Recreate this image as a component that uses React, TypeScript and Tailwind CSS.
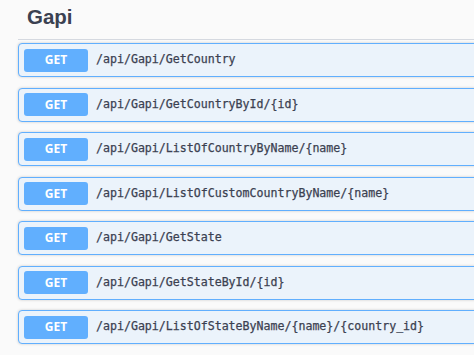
const ROUTES = [
  "/api/Gapi/GetCountry",
  "/api/Gapi/GetCountryById/{id}",
  "/api/Gapi/ListOfCountryByName/{name}",
  "/api/Gapi/ListOfCustomCountryByName/{name}",
  "/api/Gapi/GetState",
  "/api/Gapi/GetStateById/{id}",
  "/api/Gapi/ListOfStateByName/{name}/{country_id}",
]

function Operation({ path }: { path: string }) {
  return (
    <div className="flex h-[34px] items-center rounded-[4px] border border-[#61affe] bg-[#ebf3fb] pl-[5px] shadow-[0_0_3px_rgba(0,0,0,0.19)]">
      <span className="flex h-[23px] w-[64px] items-center justify-center rounded-[3px] bg-[#61affe] text-[12px] font-bold text-white [font-family:'Open_Sans',sans-serif]">
        GET
      </span>
      <span className="ml-[8px] text-[11.6px] text-[#3b4151] [font-family:'DejaVu_Sans_Mono',monospace] [-webkit-text-stroke:0.25px_#3b4151]">
        {path}
      </span>
    </div>
  )
}

export default function App() {
  return (
    <div className="h-[355px] w-[474px] overflow-hidden bg-[#fafafa]">
      <div className="w-[500px] pl-[18px]">
        {/* Tag header */}
        <div className="flex h-[40px] items-center border-b border-[#d5d9e0] pb-[4px] pl-[9px]">
          <h2 className="text-[20.5px] font-bold text-[#3b4151] [font-family:'Liberation_Sans',sans-serif]">Gapi</h2>
        </div>

        {/* Operations */}
        <div className="mt-[3px] flex flex-col gap-[10.5px]">
          {ROUTES.map((r) => (
            <Operation key={r} path={r} />
          ))}
        </div>
      </div>
    </div>
  )
}
